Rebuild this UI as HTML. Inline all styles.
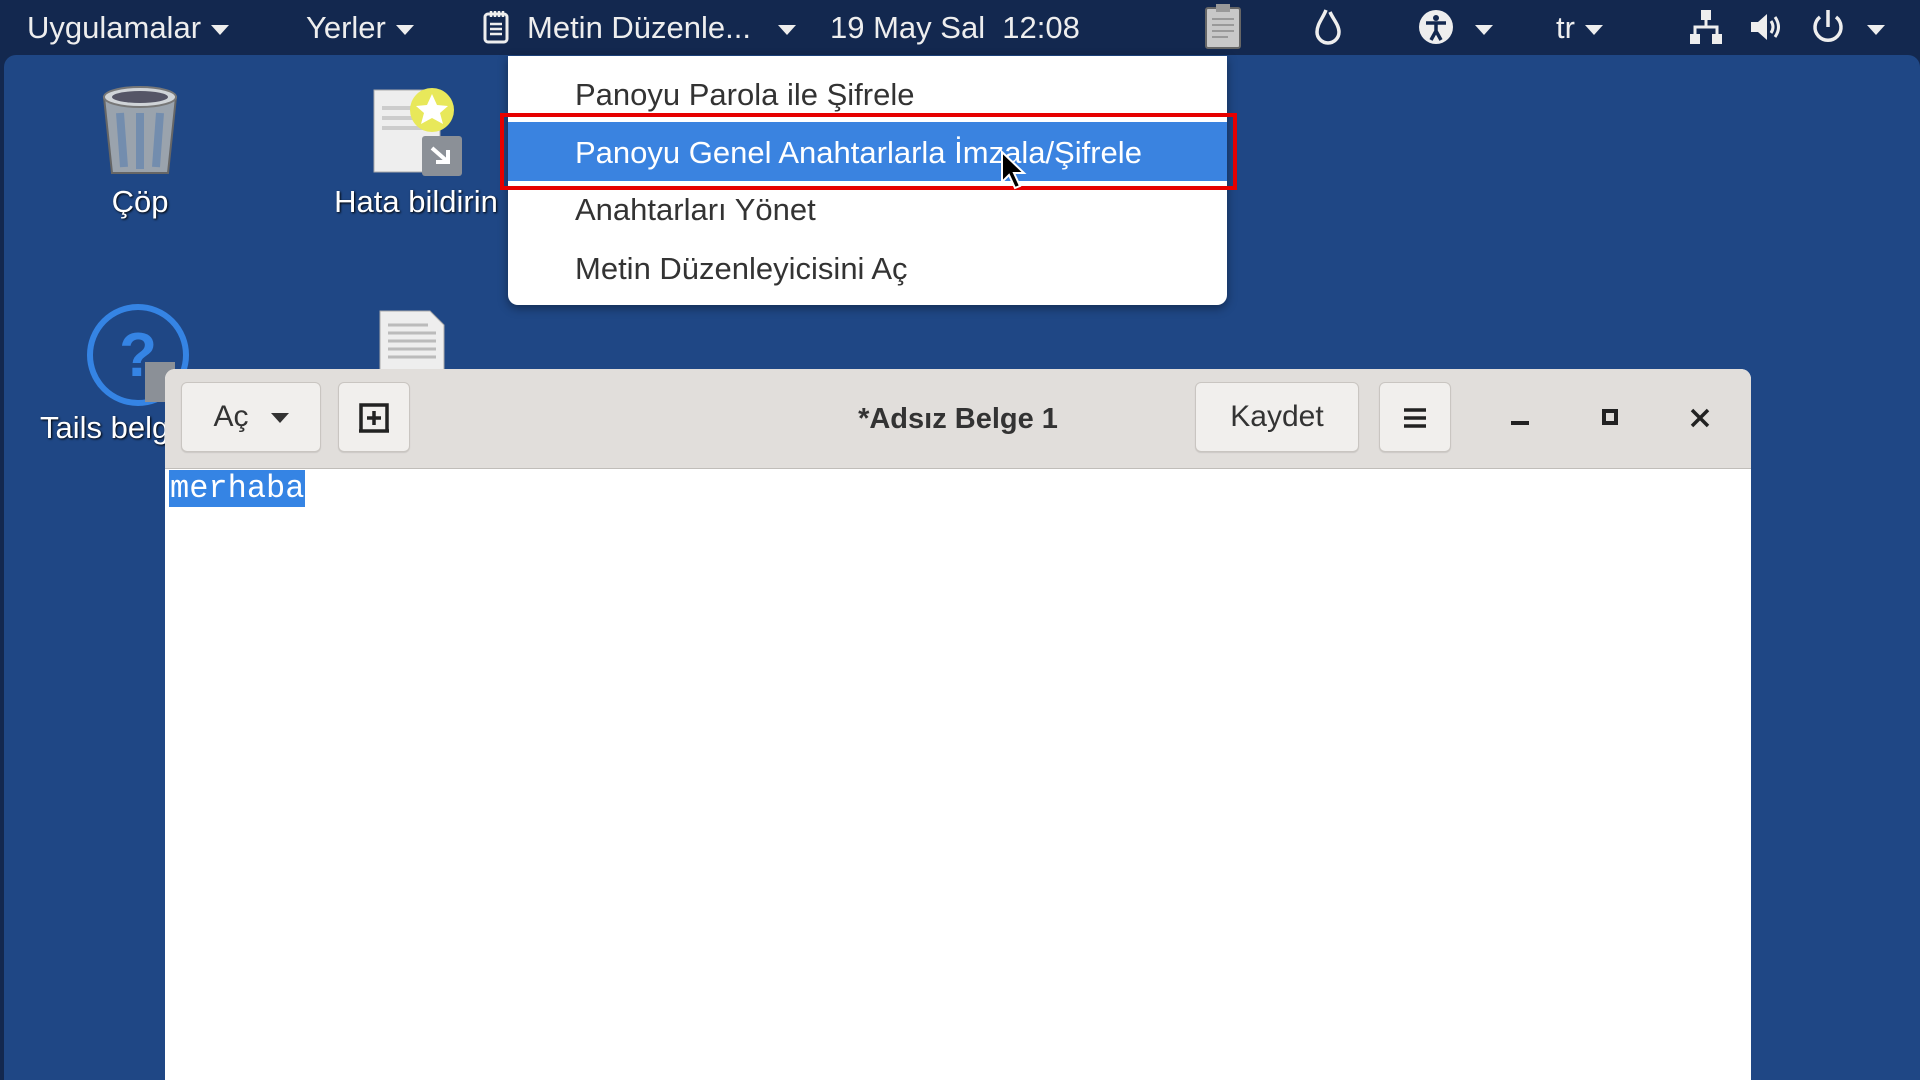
<!DOCTYPE html>
<html><head><meta charset="utf-8"><style>
*{margin:0;padding:0;box-sizing:border-box}
body{width:1920px;height:1080px;overflow:hidden;background:#13284f;font-family:"Liberation Sans","DejaVu Sans",sans-serif;position:relative}
.desk{position:absolute;left:4px;top:55px;right:0;bottom:0;background:#1f4785;border-radius:12px 12px 0 0}
.tb{position:absolute;top:0;height:55px;line-height:55px;color:#eee;font-size:31px;white-space:nowrap}
.arr{display:inline-block;width:0;height:0;border-left:9px solid transparent;border-right:9px solid transparent;border-top:10px solid #eee;vertical-align:middle;margin-left:10px}
.lbl{position:absolute;color:#fff;font-size:31px;text-shadow:1px 1px 2px #000;transform:translateX(-50%);white-space:nowrap}
.menu{position:absolute;left:508px;top:56px;width:719px;height:249px;background:#fff;border-radius:0 0 10px 10px;box-shadow:0 3px 10px rgba(0,0,0,.4)}
.mi{position:absolute;left:67px;font-size:31px;color:#333;white-space:nowrap}
.win{position:absolute;left:165px;top:369px;width:1586px;height:711px;background:#fff;border-radius:10px 10px 0 0;overflow:hidden}
.hb{height:100px;background:#e1dedb;border-bottom:1px solid #c0bdb9;position:relative}
.btn{position:absolute;top:13px;height:70px;background:#f1efed;border:1px solid #c9c5c1;border-radius:6px;box-shadow:0 1px 1px rgba(0,0,0,.1);color:#333;font-size:30px;line-height:68px;text-align:center}
</style></head><body>
<div class="desk"></div>
<div class="tb" style="left:27px">Uygulamalar<span class="arr"></span></div>
<div class="tb" style="left:306px">Yerler<span class="arr"></span></div>
<svg style="position:absolute;left:482px;top:10px" width="28" height="34" viewBox="0 0 28 34"><rect x="3" y="4" width="22" height="28" rx="3" fill="none" stroke="#eee" stroke-width="3"/><path d="M9 1v6M13 1v6M17 1v6M21 1v6M8 14h12M8 19h12M8 24h12" stroke="#eee" stroke-width="2.5"/></svg>
<div class="tb" style="left:527px">Metin Düzenle...</div>
<div class="tb" style="left:768px"><span class="arr"></span></div>
<div class="tb" style="left:830px">19 May Sal&nbsp; 12:08</div>
<svg style="position:absolute;left:1203px;top:3px" width="40" height="46"><rect x="3" y="5" width="34" height="40" rx="2" fill="#c8c8c8" stroke="#666" stroke-width="2"/><rect x="13" y="1" width="14" height="8" fill="#999"/><path d="M9 16h22M9 22h22M9 28h22M9 34h16" stroke="#999" stroke-width="2"/></svg>
<svg style="position:absolute;left:1313px;top:8px" width="30" height="38"><path d="M13 2C10 10 4 16 4 24a11 11 0 0 0 22 0c0-7-6-13-9-20" fill="none" stroke="#eee" stroke-width="3.5"/></svg>
<svg style="position:absolute;left:1417px;top:8px" width="38" height="38"><circle cx="19" cy="19" r="17" fill="#eee"/><circle cx="19" cy="10" r="3" fill="#13284f"/><path d="M9 15h20M19 15v8l-5 9M19 23l5 9" stroke="#13284f" stroke-width="3.5" fill="none"/></svg>
<div class="tb" style="left:1465px"><span class="arr"></span></div>
<div class="tb" style="left:1556px">tr<span class="arr"></span></div>
<svg style="position:absolute;left:1688px;top:8px" width="36" height="38"><rect x="13" y="2" width="10" height="10" fill="#eee"/><rect x="2" y="26" width="10" height="10" fill="#eee"/><rect x="24" y="26" width="10" height="10" fill="#eee"/><path d="M18 12v7M7 26v-7h22v7" stroke="#eee" stroke-width="3" fill="none"/></svg>
<svg style="position:absolute;left:1748px;top:10px" width="34" height="34"><path d="M3 12h7l9-8v26l-9-8H3z" fill="#eee"/><path d="M23 11q4 6 0 12M27 7q7 10 0 20" stroke="#eee" stroke-width="3" fill="none"/></svg>
<svg style="position:absolute;left:1810px;top:8px" width="36" height="38"><path d="M10 9a13 13 0 1 0 16 0" stroke="#eee" stroke-width="3.5" fill="none"/><path d="M18 2v17" stroke="#eee" stroke-width="3.5"/></svg>
<div class="tb" style="left:1857px"><span class="arr"></span></div>

<svg style="position:absolute;left:98px;top:83px" width="84" height="96"><path d="M6 14h72l-8 76H14z" fill="#9aa3ad" stroke="#666" stroke-width="2"/><ellipse cx="42" cy="14" rx="36" ry="10" fill="#d0d4d8" stroke="#777" stroke-width="2"/><ellipse cx="42" cy="14" rx="28" ry="6" fill="#556"/><path d="M22 30l4 54M42 30v56M62 30l-4 54" stroke="#5a7fb0" stroke-width="8" opacity=".6"/></svg>
<div class="lbl" style="left:140px;top:184px">Çöp</div>
<svg style="position:absolute;left:372px;top:80px" width="94" height="98"><rect x="2" y="10" width="66" height="82" fill="#eee" stroke="#aaa"/><path d="M10 28h44M10 38h44M10 48h44" stroke="#ccc" stroke-width="4"/><circle cx="60" cy="30" r="22" fill="#e8e85a"/><path d="M60 14l5 11 11 1-8 7 3 11-11-6-11 6 3-11-8-7 11-1z" fill="#fff"/><rect x="50" y="56" width="40" height="40" rx="3" fill="#8b9097"/><path d="M60 68l16 14M76 70v12H64" stroke="#fff" stroke-width="4" fill="none"/></svg>
<div class="lbl" style="left:416px;top:184px">Hata bildirin</div>
<svg style="position:absolute;left:85px;top:302px" width="110" height="110"><circle cx="53" cy="53" r="48" fill="none" stroke="#3584e4" stroke-width="6"/><text x="53" y="74" font-size="62" font-weight="bold" fill="#3584e4" text-anchor="middle" font-family="Liberation Sans">?</text><rect x="60" y="60" width="30" height="40" fill="#8b9097"/></svg>
<div class="lbl" style="left:40px;top:410px;transform:none">Tails belg</div>
<svg style="position:absolute;left:378px;top:309px" width="70" height="62"><path d="M2 2h50l14 14v46H2z" fill="#eee" stroke="#aaa"/><path d="M10 16h40M10 24h48M10 32h48M10 40h48M10 48h48" stroke="#bbb" stroke-width="3"/></svg>

<div class="menu">
<div class="mi" style="top:21px">Panoyu Parola ile Şifrele</div>
<div style="position:absolute;left:0;right:0;top:66px;height:59px;background:#3a83e0"></div>
<div class="mi" style="top:79px;color:#fff">Panoyu Genel Anahtarlarla İmzala/Şifrele</div>
<div class="mi" style="top:136px">Anahtarları Yönet</div>
<div class="mi" style="top:195px">Metin Düzenleyicisini Aç</div>
</div>
<div style="position:absolute;left:500px;top:113px;width:737px;height:77px;border:4px solid #e60000"></div>
<svg style="position:absolute;left:1000px;top:150px" width="30" height="42"><path d="M2 2v30l7-7 6 13 5-2-6-13h10z" fill="#000" stroke="#fff" stroke-width="2"/></svg>

<div class="win">
<div class="hb">
<div class="btn" style="left:16px;width:140px">Aç<span class="arr" style="border-top-color:#333;margin-left:22px"></span></div>
<div class="btn" style="left:173px;width:72px"><svg width="34" height="34" viewBox="0 0 34 34" style="vertical-align:middle"><path d="M4 30V4h26v26M2 30h30" stroke="#222" stroke-width="3.5" fill="none"/><path d="M17 10v14M10 17h14" stroke="#222" stroke-width="3.5"/></svg></div>
<div style="position:absolute;left:0;right:0;top:0;line-height:100px;text-align:center;font-size:29px;font-weight:bold;color:#333;pointer-events:none">*Adsız Belge 1</div>
<div class="btn" style="left:1030px;width:164px">Kaydet</div>
<div class="btn" style="left:1214px;width:72px"><svg width="26" height="24" style="vertical-align:middle"><path d="M2 4h22M2 12h22M2 20h22" stroke="#222" stroke-width="3.5"/></svg></div>
<div style="position:absolute;left:1346px;top:52px;width:18px;height:4px;background:#222"></div>
<div style="position:absolute;left:1437px;top:40px;width:16px;height:16px;border:4px solid #222"></div>
<svg style="position:absolute;left:1524px;top:38px" width="22" height="22"><path d="M3 3l16 16M19 3L3 19" stroke="#222" stroke-width="3.5"/></svg>
</div>
<div style="position:absolute;left:4px;top:101px;height:37px;padding:0 1px;background:#3584e4;color:#fff;font-family:'Liberation Mono',monospace;font-size:32px;line-height:37px">merhaba</div>
</div>
</body></html>
